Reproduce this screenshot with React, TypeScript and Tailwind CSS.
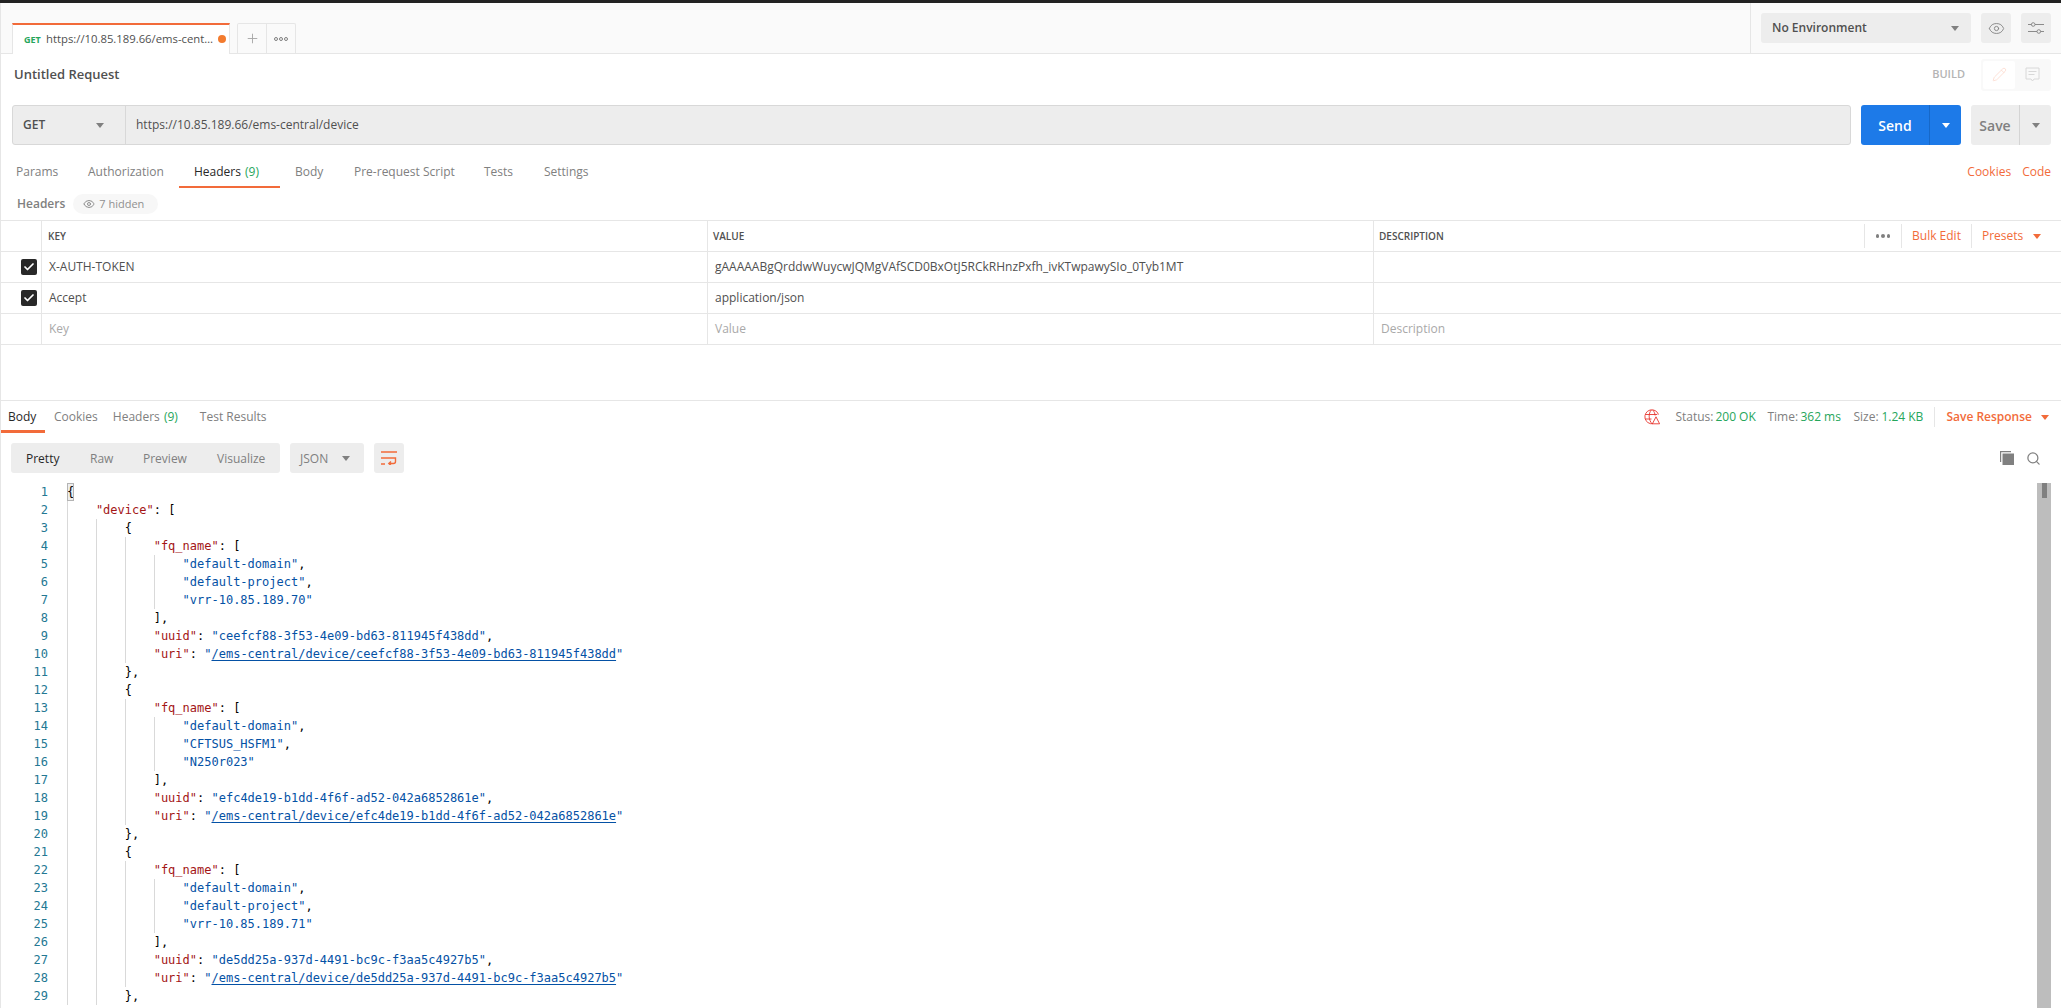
import React from "react";
import { Eye, Pencil, Search, Check, Plus } from "lucide-react";

const sans = "font-['Open_Sans','Noto_Sans',sans-serif]";

function Caret({ className }: { className: string }) {
  return (
    <svg viewBox="0 0 8 5" className={`w-[8px] h-[5px] shrink-0 ${className}`}>
      <path d="M0 0h8L4 5z" fill="currentColor" />
    </svg>
  );
}

type Tok = { t: string; c: "k" | "s" | "p" | "l" };
type Line = { i: number; toks: Tok[] };
const p = (t: string): Tok => ({ t, c: "p" });
const k = (t: string): Tok => ({ t, c: "k" });
const s = (t: string): Tok => ({ t, c: "s" });
const l = (t: string): Tok => ({ t, c: "l" });

function device(a: string, b: string, c: string, id: string): Line[] {
  return [
    { i: 2, toks: [p("{")] },
    { i: 3, toks: [k('"fq_name"'), p(": [")] },
    { i: 4, toks: [s(`"${a}"`), p(",")] },
    { i: 4, toks: [s(`"${b}"`), p(",")] },
    { i: 4, toks: [s(`"${c}"`)] },
    { i: 3, toks: [p("],")] },
    { i: 3, toks: [k('"uuid"'), p(": "), s(`"${id}"`), p(",")] },
    { i: 3, toks: [k('"uri"'), p(": "), s('"'), l(`/ems-central/device/${id}`), s('"')] },
    { i: 2, toks: [p("},")] },
  ];
}

const lines: Line[] = [
  { i: 0, toks: [p("{")] },
  { i: 1, toks: [k('"device"'), p(": [")] },
  ...device("default-domain", "default-project", "vrr-10.85.189.70", "ceefcf88-3f53-4e09-bd63-811945f438dd"),
  ...device("default-domain", "CFTSUS_HSFM1", "N250r023", "efc4de19-b1dd-4f6f-ad52-042a6852861e"),
  ...device("default-domain", "default-project", "vrr-10.85.189.71", "de5dd25a-937d-4491-bc9c-f3aa5c4927b5"),
];

const tokClass = {
  k: "text-[#a31515]",
  s: "text-[#0451a5]",
  p: "text-[#000000]",
  l: "text-[#0451a5] underline underline-offset-2",
};

function Row({ checked, a, b, c, ph }: { checked?: boolean; a: string; b: string; c: string; ph?: boolean }) {
  const tone = ph ? "text-[#a9a9a9]" : "text-[#505050]";
  return (
    <div className={`flex h-[31px] items-center border-b border-[#e6e6e6] text-[12px] ${tone}`}>
      <div className="w-[41px] h-full flex items-center justify-end pr-[3px] border-r border-[#e6e6e6]">
        {checked && (
          <span className="w-[16px] h-[16px] mr-[1px] rounded-[2px] bg-[#282828] flex items-center justify-center">
            <Check className="w-[12px] h-[12px] text-white" strokeWidth={3.5} />
          </span>
        )}
      </div>
      <div className="w-[666px] h-full flex items-center pl-[7px] border-r border-[#e6e6e6]">{a}</div>
      <div className="w-[666px] h-full flex items-center pl-[7px] border-r border-[#e6e6e6]">{b}</div>
      <div className="flex-1 h-full flex items-center pl-[7px]">{c}</div>
    </div>
  );
}

export default function App() {
  return (
    <div className={`w-[2061px] h-[1008px] overflow-hidden bg-white flex flex-col ${sans}`}>
      <div className="h-[3px] bg-[#222222] shrink-0" />

      {/* tab strip */}
      <div className="h-[51px] shrink-0 bg-[#fafafa] border-b border-[#e6e6e6] flex border-l border-l-[#e6e6e6]">
        <div className="flex-1 flex items-end pl-[11px]">
          <div className="w-[218px] h-[31px] -mb-[1px] bg-white border-t-[2px] border-t-[#f26b3a] border-x border-x-[#e6e6e6] flex items-center pl-[11px] text-[11.3px] text-[#505050]">
            <span className="text-[9px] font-bold text-[#26a65b] w-[22px] shrink-0">GET</span>
            <span className="w-[168px] truncate">https://10.85.189.66/ems-central/device</span>
            <span className="ml-[4px] w-[8px] h-[8px] rounded-full bg-[#f37b2e] -mt-[1px]" />
          </div>
          <div className="ml-[7px] h-[30px] flex border border-b-0 border-[#e6e6e6] rounded-t-[2px]">
            <div className="w-[29px] flex items-center justify-center border-r border-[#e6e6e6]">
              <Plus className="w-[15px] h-[15px] text-[#a8a8a8]" strokeWidth={1.5} />
            </div>
            <div className="w-[28px] flex items-center justify-center gap-[1px]">
              <span className="w-[4px] h-[4px] rounded-full border border-[#808080]" />
              <span className="w-[4px] h-[4px] rounded-full border border-[#808080]" />
              <span className="w-[4px] h-[4px] rounded-full border border-[#808080]" />
            </div>
          </div>
        </div>
        <div className="w-[311px] border-l border-[#e6e6e6] pl-[10px] pr-[10px] flex items-center gap-[10px]">
          <div className="w-[210px] h-[30px] rounded-[3px] bg-[#ededed] flex items-center justify-between pl-[11px] pr-[12px] text-[12px] font-semibold text-[#505050]">
            <span>No Environment</span>
            <Caret className="text-[#808080]" />
          </div>
          <div className="w-[30px] h-[30px] rounded-[3px] bg-[#ededed] flex items-center justify-center">
            <Eye className="w-[17px] h-[17px] text-[#808080]" strokeWidth={1.25} />
          </div>
          <div className="w-[30px] h-[30px] rounded-[3px] bg-[#ededed] flex items-center justify-center">
            <svg viewBox="0 0 16 12" className="w-[16px] h-[12px] text-[#808080]" fill="none" stroke="currentColor" strokeWidth="0.9">
              <path d="M0 2.5h3.5M7 2.5h9M0 9.5h9M12.5 9.5H16" />
              <circle cx="5.2" cy="2.5" r="1.8" />
              <circle cx="10.8" cy="9.5" r="1.8" />
            </svg>
          </div>
        </div>
      </div>

      <div className="flex-1 flex flex-col min-h-0 border-l border-[#e6e6e6]">
        {/* title */}
        <div className="h-[41px] shrink-0 flex items-center justify-between pl-[13px] pr-[10px]">
          <span className="text-[13px] font-semibold text-[#505050]">Untitled Request</span>
          <div className="flex items-center gap-[16px]">
            <span className="text-[11px] font-semibold text-[#b4b4b4]">BUILD</span>
            <div className="w-[70px] h-[32px] rounded-[3px] bg-[#f9f9f9] flex items-center p-[2px]">
              <div className="w-[32px] h-[28px] bg-white rounded-[2px] flex items-center justify-center">
                <Pencil className="w-[15px] h-[15px] text-[#fcd9cc]" strokeWidth={1.25} />
              </div>
              <div className="flex-1 flex items-center justify-center">
                <svg viewBox="0 0 15 15" className="w-[15px] h-[15px] text-[#d8d8d8]" fill="none" stroke="currentColor" strokeWidth="1">
                  <path d="M1 1h13v11H9l-1.5 2L6 12H1zM3.5 4.5h8M3.5 7.5h6" />
                </svg>
              </div>
            </div>
          </div>
        </div>

        {/* url row */}
        <div className="h-[40px] mt-[10px] shrink-0 flex pl-[11px] pr-[10px]">
          <div className="flex-1 flex bg-[#ededed] border border-[#d8d8d8] rounded-[3px] text-[12px]">
            <div className="w-[113px] border-r border-[#d8d8d8] flex items-center justify-between pl-[10px] pr-[21px] font-semibold text-[#505050]">
              <span>GET</span>
              <Caret className="text-[#808080]" />
            </div>
            <div className="flex-1 flex items-center pl-[10px] text-[#505050]">https://10.85.189.66/ems-central/device</div>
          </div>
          <div className="ml-[10px] w-[100px] bg-[#1d7ae8] rounded-[3px] flex text-white">
            <div className="w-[69px] border-r border-[#1668c9] flex items-center justify-center text-[14px] font-semibold">Send</div>
            <div className="flex-1 flex items-center justify-center"><Caret className="text-white" /></div>
          </div>
          <div className="ml-[10px] w-[80px] bg-[#ededed] rounded-[3px] flex text-[#808080]">
            <div className="w-[49px] border-r border-[#d4d4d4] flex items-center justify-center text-[14px] font-semibold">Save</div>
            <div className="flex-1 flex items-center justify-center"><Caret className="text-[#808080]" /></div>
          </div>
        </div>

        {/* request tabs */}
        <div className="h-[43px] shrink-0 flex items-start justify-between pr-[10px] text-[12px] text-[#808080]">
          <div className="flex h-[43px] pl-[15px]">
            <span className="pt-[18px] w-[72px]">Params</span>
            <span className="pt-[18px] w-[91px]">Authorization</span>
            <span className="pt-[18px] h-[43px] w-[101px] pl-[15px] border-b-[2px] border-[#f26b3a] text-[#282828]">
              Headers <span className="text-[#26a65b] ml-[1px]">(9)</span>
            </span>
            <span className="pt-[18px] w-[74px] pl-[15px]">Body</span>
            <span className="pt-[18px] w-[130px]">Pre-request Script</span>
            <span className="pt-[18px] w-[60px]">Tests</span>
            <span className="pt-[18px]">Settings</span>
          </div>
          <div className="flex gap-[11px] pt-[18px] text-[#f26b3a]">
            <span>Cookies</span>
            <span>Code</span>
          </div>
        </div>

        {/* headers label */}
        <div className="h-[32px] shrink-0 flex items-center pl-[16px] text-[12px] font-semibold text-[#808080]">
          <span>Headers</span>
          <span className="ml-[8px] w-[85px] h-[20px] rounded-[10px] bg-[#f7f7f7] flex items-center pl-[10px] gap-[4px] font-normal text-[11px] text-[#909090]">
            <Eye className="w-[12px] h-[12px]" strokeWidth={2} /> 7 hidden
          </span>
        </div>

        {/* table */}
        <div className="shrink-0 border-t border-[#e6e6e6]">
          <div className="flex h-[31px] items-center border-b border-[#e6e6e6] text-[10px] font-semibold text-[#505050]">
            <div className="w-[41px] h-full border-r border-[#e6e6e6]" />
            <div className="w-[666px] h-full flex items-center pl-[6px] border-r border-[#e6e6e6]">KEY</div>
            <div className="w-[666px] h-full flex items-center pl-[5px] border-r border-[#e6e6e6]">VALUE</div>
            <div className="flex-1 h-full flex items-center justify-between pl-[5px]">
              <span>DESCRIPTION</span>
              <div className="flex items-center h-[24px] text-[12px] font-normal text-[#f26b3a]">
                <div className="w-[38px] h-full border-x border-[#e6e6e6] flex items-center justify-center gap-[2px]">
                  <span className="w-[3.5px] h-[3.5px] rounded-full bg-[#808080]" />
                  <span className="w-[3.5px] h-[3.5px] rounded-full bg-[#808080]" />
                  <span className="w-[3.5px] h-[3.5px] rounded-full bg-[#808080]" />
                </div>
                <div className="w-[70px] h-full border-r border-[#e6e6e6] flex items-center justify-center">Bulk Edit</div>
                <div className="w-[89px] h-full flex items-center pl-[10px] gap-[10px]">
                  Presets <Caret className="text-[#f26b3a]" />
                </div>
              </div>
            </div>
          </div>
          <Row checked a="X-AUTH-TOKEN" b="gAAAAABgQrddwWuycwJQMgVAfSCD0BxOtJ5RCkRHnzPxfh_ivKTwpawySIo_0Tyb1MT" c="" />
          <Row checked a="Accept" b="application/json" c="" />
          <Row a="Key" b="Value" c="Description" ph />
        </div>

        <div className="h-[56px] shrink-0 border-b border-[#e6e6e6]" />

        {/* response tabs */}
        <div className="h-[32px] shrink-0 flex items-stretch justify-between pr-[12px] text-[12px] text-[#808080]">
          <div className="flex">
            <span className="w-[44px] pl-[7px] pt-[7px] border-b-[3px] border-[#f26b3a] text-[#282828]">Body</span>
            <span className="pl-[9px] pt-[7px]">Cookies</span>
            <span className="pl-[15px] pt-[7px]">Headers <span className="text-[#26a65b] ml-[1px]">(9)</span></span>
            <span className="pl-[22px] pt-[7px]">Test Results</span>
          </div>
          <div className="flex items-start pt-[7px]">
            <svg viewBox="0 0 16 16" className="w-[16px] h-[16px] mt-[1px] text-[#e8352e]" fill="none" stroke="currentColor" strokeWidth="0.9">
              <path d="M9 14.7A7 7 0 1 1 14.5 5.5" />
              <path d="M1.3 5.5h12M1 10h6.5M7.3 1c-3 3.5-3 10 1 14M8.7 1c1.5 1.7 2.3 3.5 2.4 5.5" />
              <path d="M12 7.8l3.6 7H8.4z" />
            </svg>
            <span className="ml-[15px] w-[40px]">Status:</span>
            <span className="text-[#26a65b] w-[52px]">200 OK</span>
            <span className="w-[33px]">Time:</span>
            <span className="text-[#26a65b] w-[53px]">362 ms</span>
            <span className="w-[28px]">Size:</span>
            <span className="text-[#26a65b] w-[53px]">1.24 KB</span>
            <div className="h-[20px] -mt-[1px] border-l border-[#e6e6e6] pl-[11px] flex items-center gap-[9px] font-semibold text-[#f26b3a]">
              Save Response <Caret className="text-[#f26b3a]" />
            </div>
          </div>
        </div>

        {/* response toolbar */}
        <div className="h-[30px] mt-[10px] shrink-0 flex items-center pl-[10px] pr-[20px] text-[12px]">
          <div className="w-[269px] h-full pt-[1px] rounded-[3px] bg-[#ededed] flex items-center text-[#808080]">
            <span className="pl-[15px] w-[79px] text-[#282828]">Pretty</span>
            <span className="w-[53px]">Raw</span>
            <span className="w-[74px]">Preview</span>
            <span>Visualize</span>
          </div>
          <div className="ml-[10px] w-[74px] h-full pt-[1px] rounded-[3px] bg-[#ededed] flex items-center justify-between pl-[10px] pr-[14px] text-[#808080]">
            JSON <Caret className="text-[#808080]" />
          </div>
          <div className="ml-[10px] w-[30px] h-full rounded-[3px] bg-[#ededed] flex items-center justify-center">
            <svg viewBox="0 0 16 14" className="w-[16px] h-[14px] text-[#f26b3a]" fill="none" stroke="currentColor" strokeWidth="1.4">
              <path d="M0 1h16M0 7h14.5v3.5a2 2 0 0 1-2 2H8M0 13h4M10 10.5l-2.2 2 2.2 2" />
            </svg>
          </div>
          <div className="ml-auto flex items-center gap-[12px] text-[#808080]">
            <svg viewBox="0 0 14 14" className="w-[14px] h-[14px]" fill="currentColor">
              <path d="M0 0h11v1.2H1.2V11H0z" />
              <path d="M2.5 2.5H14V14H2.5z" />
            </svg>
            <Search className="w-[15px] h-[15px]" strokeWidth={2} />
          </div>
        </div>

        {/* code */}
        <div className="flex-1 min-h-0 flex pt-[10px] pr-[10px] overflow-hidden">
          <div className="flex-1 font-['DejaVu_Sans_Mono','Liberation_Mono',monospace] text-[12px] leading-[18px]">
            {lines.map((ln, n) => (
              <div key={n} className="flex h-[18px]">
                <span className="w-[47px] shrink-0 text-right text-[#237893]">{n + 1}</span>
                <div className="ml-[19px] flex whitespace-pre">
                  {Array.from({ length: ln.i }).map((_, g) => (
                    <span key={g} className="w-[28.9px] h-[18px] border-l border-[#d9d9d9] shrink-0" />
                  ))}
                  {n === 0 ? (
                    <span className="bg-[#eeeeee] outline outline-1 -outline-offset-1 outline-[#b4b4b4] text-black">{"{"}</span>
                  ) : (
                    ln.toks.map((t, j) => (
                      <span key={j} className={tokClass[t.c]}>{t.t}</span>
                    ))
                  )}
                </div>
              </div>
            ))}
          </div>
          <div className="w-[14px] shrink-0 bg-[#bdbdbd] flex justify-center">
            <div className="w-[5px] h-[15px] bg-[#808080]" />
          </div>
        </div>
      </div>
    </div>
  );
}
